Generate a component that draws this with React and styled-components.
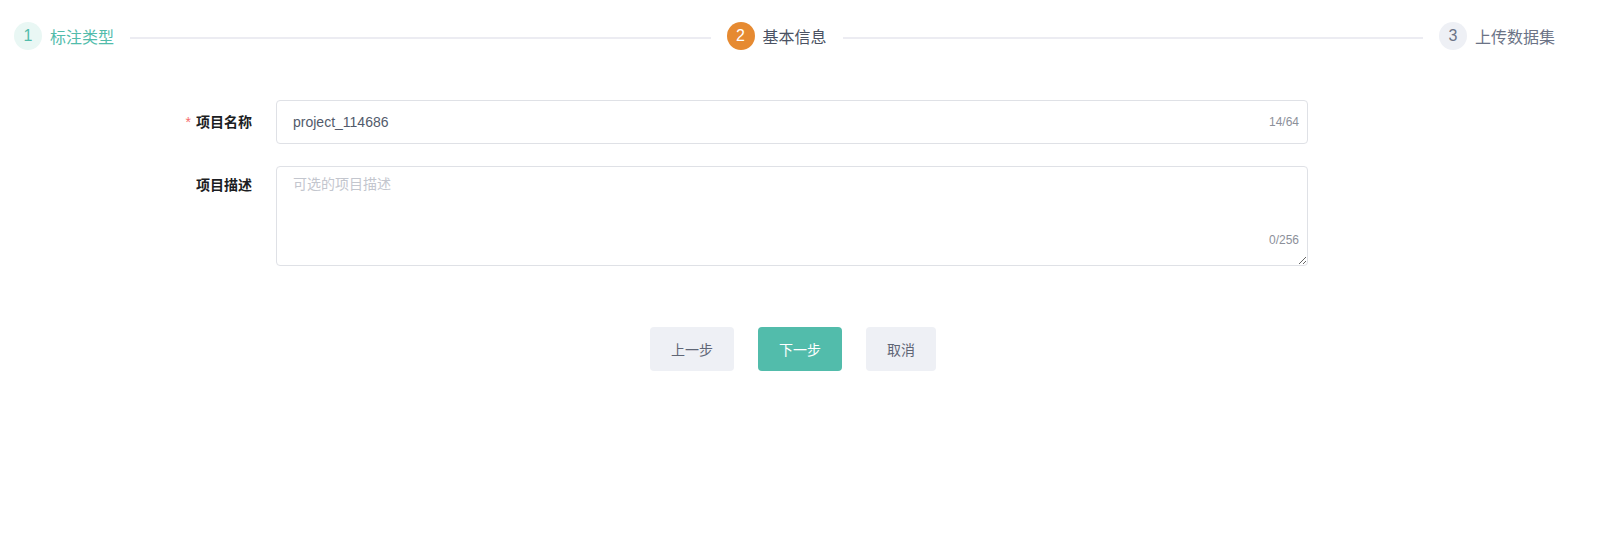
import React, { useState } from "react";
import styled, { createGlobalStyle } from "styled-components";

const GlobalStyle = createGlobalStyle`
  html, body {
    margin: 0;
    padding: 0;
    background: #ffffff;
    font-family: "Liberation Sans", "Noto Sans CJK SC", sans-serif;
  }
  * {
    box-sizing: border-box;
  }
`;

const Page = styled.div`
  width: 100%;
  min-height: 536px;
  background: #ffffff;
`;

/////////////////////////////// steps
const Steps = styled.div`
  display: flex;
  align-items: center;
  padding: 22px 47px 0 14px;
`;

const Step = styled.div`
  display: flex;
  align-items: center;
  flex-shrink: 0;
`;

const Circle = styled.div`
  width: 28px;
  height: 28px;
  border-radius: 50%;
  display: flex;
  align-items: center;
  justify-content: center;
  font-size: 16px;
  background: ${(p) => p.$bg};
  color: ${(p) => p.$color};
`;

const StepLabel = styled.span`
  margin-left: 8px;
  font-size: 16px;
  color: ${(p) => p.$color};
`;

const Line = styled.div`
  flex: 1;
  height: 2px;
  margin: 3px 16px 0 16px;
  background: #ececf2;
`;

/////////////////////////////// form
const Form = styled.div`
  margin-top: 50px;
  padding-left: 156px;
  width: 1308px;
`;

const Row = styled.div`
  display: flex;
  align-items: flex-start;
  margin-bottom: 22px;
`;

const Label = styled.label`
  width: 120px;
  padding-right: 24px;
  text-align: right;
  font-size: 14px;
  font-weight: bold;
  color: #1b1d22;
  line-height: ${(p) => p.$lh};
  flex-shrink: 0;
`;

const Star = styled.span`
  color: #f56c6c;
  margin-right: 5px;
  font-weight: normal;
`;

const Field = styled.div`
  position: relative;
  flex: 1;
`;

const Input = styled.input`
  width: 100%;
  height: 44px;
  border: 1px solid #dfe1e6;
  border-radius: 4px;
  padding: 0 60px 0 16px;
  font-size: 14px;
  font-family: inherit;
  color: #525a6b;
  outline: none;
`;

const TextArea = styled.textarea`
  display: block;
  width: 100%;
  height: 100px;
  border: 1px solid #dfe1e6;
  border-radius: 4px;
  padding: 7px 16px;
  font-size: 14px;
  line-height: 20px;
  font-family: inherit;
  color: #525a6b;
  outline: none;
  resize: vertical;

  &::placeholder {
    color: #c3c6ce;
  }
`;

const Counter = styled.span`
  position: absolute;
  right: ${(p) => p.$right};
  ${(p) => (p.$bottom ? `bottom: ${p.$bottom};` : "top: 50%; transform: translateY(-50%);")}
  font-size: 12px;
  color: #8c909a;
`;

const Buttons = styled.div`
  display: flex;
  justify-content: center;
  gap: 24px;
  margin-top: 61px;
  margin-left: 122px;
`;

const Btn = styled.button`
  height: 44px;
  padding: 0 ${(p) => p.$pad};
  border: none;
  border-radius: 4px;
  font-size: 14px;
  font-family: inherit;
  cursor: pointer;
  background: ${(p) => (p.$primary ? "#52bcab" : "#eef0f5")};
  color: ${(p) => (p.$primary ? "#ffffff" : "#5f6675")};
`;

const steps = [
  { n: 1, label: "标注类型", bg: "#e9f7f4", color: "#52bcab", text: "#52bcab" },
  { n: 2, label: "基本信息", bg: "#e68a31", color: "#ffffff", text: "#4b5263" },
  { n: 3, label: "上传数据集", bg: "#eef0f5", color: "#6b7386", text: "#6b7386" },
];

export default function App() {
  const [name, setName] = useState("project_114686");
  const [desc, setDesc] = useState("");

  return (
    <Page>
      <GlobalStyle />
      <Steps>
        {steps.map((s, i) => (
          <React.Fragment key={s.n}>
            <Step>
              <Circle $bg={s.bg} $color={s.color}>{s.n}</Circle>
              <StepLabel $color={s.text}>{s.label}</StepLabel>
            </Step>
            {i < steps.length - 1 && <Line />}
          </React.Fragment>
        ))}
      </Steps>

      <Form>
        <Row>
          <Label $lh="44px">
            <Star>*</Star>项目名称
          </Label>
          <Field>
            <Input value={name} maxLength={64} onChange={(e) => setName(e.target.value)} />
            <Counter $right="9px">{name.length}/64</Counter>
          </Field>
        </Row>
        <Row>
          <Label $lh="38px">项目描述</Label>
          <Field>
            <TextArea
              placeholder="可选的项目描述"
              maxLength={256}
              value={desc}
              onChange={(e) => setDesc(e.target.value)}
            />
            <Counter $right="9px" $bottom="19px">{desc.length}/256</Counter>
          </Field>
        </Row>
        <Buttons>
          <Btn $pad="21px">上一步</Btn>
          <Btn $primary $pad="21px">下一步</Btn>
          <Btn $pad="21px">取消</Btn>
        </Buttons>
      </Form>
    </Page>
  );
}
